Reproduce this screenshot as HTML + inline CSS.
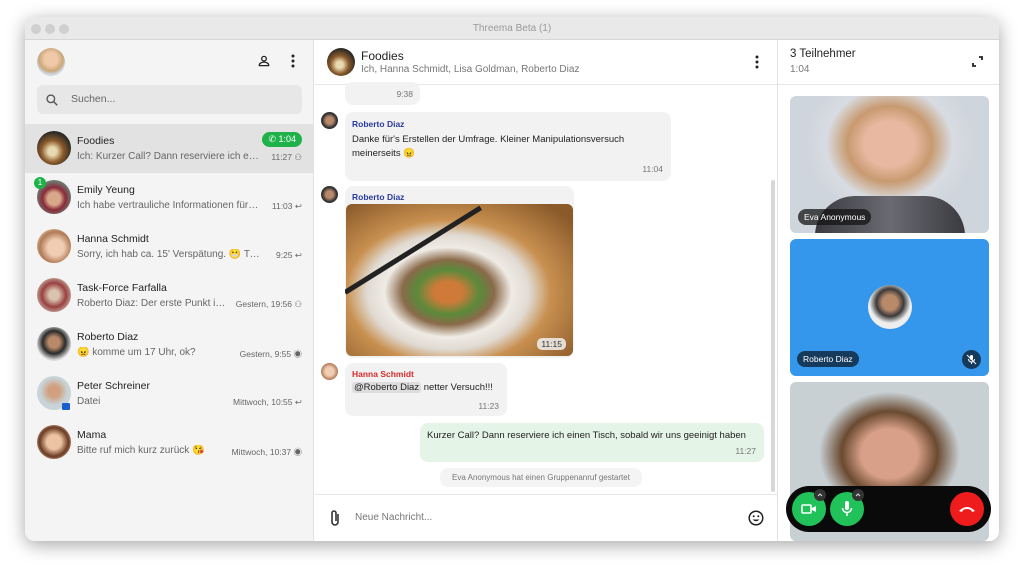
<!DOCTYPE html>
<html><head><meta charset="utf-8"><style>
*{box-sizing:border-box;margin:0;padding:0}
body{width:1024px;height:571px;background:#fff;font-family:"Liberation Sans","Noto Sans CJK JP",sans-serif;position:relative;overflow:hidden;color:#222}
.win{position:absolute;left:25px;top:17px;width:974px;height:524px;border-radius:10px;overflow:hidden;box-shadow:0 4px 18px rgba(0,0,0,.35);background:#fff}
.tb{position:absolute;left:0;top:0;width:974px;height:23px;background:#e9e9e9;border-bottom:1px solid #d6d6d6;text-align:center;font-size:10px;color:#9a9a9a;line-height:23px}
.dot{position:absolute;top:7px;width:10px;height:10px;border-radius:50%;background:#cfcfcf}
.left{position:absolute;left:0;top:23px;width:289px;height:501px;background:#f4f4f4;border-right:1px solid #e2e2e2}
.av{position:absolute;border-radius:50%}
.search{position:absolute;left:12px;top:45px;width:265px;height:29px;background:#e7e7e7;border-radius:6px;font-size:10.5px;color:#666;line-height:29px;padding-left:34px}
.row{position:absolute;left:0;width:289px;height:49px}
.row .n{position:absolute;left:52px;top:11px;font-size:10.5px;color:#222}
.row .m{position:absolute;left:52px;top:27px;font-size:10px;color:#666;white-space:nowrap;overflow:hidden;text-overflow:ellipsis;max-width:188px}
.row .t{position:absolute;right:12px;top:28px;font-size:8.5px;color:#666}
.row .av{left:12px;top:7px;width:34px;height:34px}
.mid{position:absolute;left:290px;top:23px;width:462px;height:501px;background:#fff}
.hdr{position:absolute;left:0;top:0;width:462px;height:45px;border-bottom:1px solid #e6e6e6;background:#fff}
.bub{position:absolute;background:#f2f2f2;border-radius:8px;font-size:9.5px;white-space:nowrap}
.sn{font-size:8.5px;font-weight:bold;color:#2a3b9e}
.tm{position:absolute;right:8px;font-size:8.5px;color:#777}
.right{position:absolute;left:752px;top:23px;width:222px;height:501px;background:#fff;border-left:1px solid #e2e2e2}
.tile{position:absolute;left:12px;width:199px;border-radius:6px;overflow:hidden}
.lbl{position:absolute;background:rgba(20,20,20,.75);color:#fff;font-size:8.5px;border-radius:9px;padding:3px 6px}
</style></head><body>
<div class="win">
<div class="tb"><div class="dot" style="left:6px"></div><div class="dot" style="left:20px"></div><div class="dot" style="left:34px"></div>Threema Beta (1)</div>
<div class="left">
 <div class="av" style="left:12px;top:8px;width:28px;height:28px;background:radial-gradient(circle at 50% 40%,#f0c9a8 30%,#c9a77a 55%,#cfd8e4 70%)"></div>
 <svg style="position:absolute;left:232px;top:14px" width="14" height="14" viewBox="0 0 24 24"><circle cx="12" cy="8" r="4" fill="none" stroke="#222" stroke-width="2.2"/><path d="M4 20v-1c0-3 4-5 8-5s8 2 8 5v1z" fill="none" stroke="#222" stroke-width="2.2"/></svg>
 <svg style="position:absolute;left:264px;top:14px" width="8" height="14" viewBox="0 0 8 14"><circle cx="4" cy="2" r="1.5" fill="#222"/><circle cx="4" cy="7" r="1.5" fill="#222"/><circle cx="4" cy="12" r="1.5" fill="#222"/></svg>
 <div class="search">Suchen...</div>
 <svg style="position:absolute;left:20px;top:53px" width="14" height="14" viewBox="0 0 24 24"><circle cx="10" cy="10" r="6.5" fill="none" stroke="#555" stroke-width="2.3"/><path d="M15 15l6 6" stroke="#555" stroke-width="2.5"/></svg>
 <div class="row" style="top:84px;background:#e2e2e2"><div class="av" style="background:radial-gradient(circle at 45% 60%,#e8d9b0 15%,#8a5a2a 40%,#2d2a26 70%)"></div><div class="n">Foodies</div><div class="m" style="max-width:182px">Ich: Kurzer Call? Dann reserviere ich eine...</div><div class="t">11:27 ⚇</div>
  <div style="position:absolute;right:12px;top:8px;background:#1fb24a;color:#fff;font-size:9px;border-radius:8px;padding:2px 6px">✆ 1:04</div></div>
 <div class="row" style="top:133px"><div class="av" style="background:radial-gradient(circle at 50% 55%,#d8a88a 25%,#8b2a3a 45%,#6d7a70 70%)"></div><div class="n">Emily Yeung</div><div class="m" style="max-width:182px">Ich habe vertrauliche Informationen für d...</div><div class="t">11:03 ↩</div>
  <div style="position:absolute;left:9px;top:4px;width:12px;height:12px;border-radius:50%;background:#1fb24a;color:#fff;font-size:8px;text-align:center;line-height:12px">1</div></div>
 <div class="row" style="top:182px"><div class="av" style="background:radial-gradient(circle at 55% 55%,#f1cdb4 30%,#b07a55 60%,#dcc2a8 80%)"></div><div class="n">Hanna Schmidt</div><div class="m" style="max-width:186px">Sorry, ich hab ca. 15' Verspätung. 😬 Tut ...</div><div class="t">9:25 ↩</div></div>
 <div class="row" style="top:231px"><div class="av" style="background:radial-gradient(circle at 50% 50%,#d9c4b0 20%,#9a4040 50%,#c8b8a8 80%)"></div><div class="n">Task-Force Farfalla</div><div class="m" style="max-width:150px">Roberto Diaz: Der erste Punkt is...</div><div class="t">Gestern, 19:56 ⚇</div></div>
 <div class="row" style="top:280px"><div class="av" style="background:radial-gradient(circle at 50% 45%,#b88a6a 22%,#2a2a2a 45%,#ddd 70%)"></div><div class="n">Roberto Diaz</div><div class="m">😠 komme um 17 Uhr, ok?</div><div class="t">Gestern, 9:55 ◉</div></div>
 <div class="row" style="top:329px"><div class="av" style="background:radial-gradient(circle at 50% 45%,#d0a080 22%,#c8d4d8 55%)"></div><div class="n">Peter Schreiner</div><div class="m">Datei</div><div class="t">Mittwoch, 10:55 ↩</div>
  <div style="position:absolute;left:37px;top:34px;width:8px;height:7px;background:#1a5fd0;border-radius:1px"></div></div>
 <div class="row" style="top:378px"><div class="av" style="background:radial-gradient(circle at 50% 50%,#ecc3a3 30%,#6a3a22 60%,#c8a890 80%)"></div><div class="n">Mama</div><div class="m">Bitte ruf mich kurz zurück 😘</div><div class="t">Mittwoch, 10:37 ◉</div></div>
</div>
<div class="mid">
 <div class="hdr">
  <div class="av" style="left:12px;top:8px;width:28px;height:28px;background:radial-gradient(circle at 45% 60%,#e8d9b0 15%,#8a5a2a 40%,#2d2a26 70%)"></div>
  <div style="position:absolute;left:46px;top:9px;font-size:12px">Foodies</div>
  <div style="position:absolute;left:46px;top:24px;font-size:10px;color:#777">Ich, Hanna Schmidt, Lisa Goldman, Roberto Diaz</div>
  <svg style="position:absolute;left:438px;top:15px" width="8" height="14" viewBox="0 0 8 14"><circle cx="4" cy="2" r="1.5" fill="#222"/><circle cx="4" cy="7" r="1.5" fill="#222"/><circle cx="4" cy="12" r="1.5" fill="#222"/></svg>
 </div>
 <div class="bub" style="left:30px;top:42px;width:75px;height:23px"><span class="tm" style="top:7px;right:7px">9:38</span></div>
 <div class="av" style="left:6px;top:72px;width:17px;height:17px;background:radial-gradient(circle,#b88a6a 30%,#333 60%)"></div>
 <div class="bub" style="left:30px;top:72px;width:326px;height:69px;padding:7px 7px"><div class="sn">Roberto Diaz</div><div style="margin-top:4px;line-height:14px">Danke für's Erstellen der Umfrage. Kleiner Manipulationsversuch<br>meinerseits 😠</div><span class="tm" style="top:52px">11:04</span></div>
 <div class="av" style="left:6px;top:146px;width:17px;height:17px;background:radial-gradient(circle,#b88a6a 30%,#333 60%)"></div>
 <div class="bub" style="left:30px;top:146px;width:229px;height:172px;padding:6px 7px;overflow:hidden"><div class="sn">Roberto Diaz</div>
  <div style="position:absolute;left:1px;top:18px;width:227px;height:152px;border-radius:6px;background:radial-gradient(ellipse at 45% 58%,#d07a3a 8%,#5a8a3a 18%,#8a6a4a 26%,#efebe5 36%,#e0dad2 46%,#c89050 58%,#8a5a2a 90%)"></div>
  <div style="position:absolute;left:0px;top:104px;width:160px;height:5px;background:#222;transform:rotate(-32deg);transform-origin:left center"></div>
  <span class="tm" style="top:152px;background:rgba(240,240,240,.85);border-radius:5px;padding:1px 4px;color:#333">11:15</span></div>
 <div class="av" style="left:6px;top:323px;width:17px;height:17px;background:radial-gradient(circle,#f1cdb4 35%,#b07a55 70%)"></div>
 <div class="bub" style="left:30px;top:323px;width:162px;height:53px;padding:6px 7px"><div class="sn" style="color:#d62a2a">Hanna Schmidt</div><div style="margin-top:3px"><span style="background:#ddd;border-radius:3px;padding:0 2px">@Roberto Diaz</span> netter Versuch!!!</div><span class="tm" style="top:38px">11:23</span></div>
 <div class="bub" style="left:105px;top:383px;width:344px;height:39px;background:#e4f4e7;padding:7px 7px"><div>Kurzer Call? Dann reserviere ich einen Tisch, sobald wir uns geeinigt haben</div><span class="tm" style="top:23px">11:27</span></div>
 <div class="bub" style="left:125px;top:428px;width:202px;height:19px;font-size:8px;color:#777;text-align:center;line-height:19px;background:#f4f4f4">Eva Anonymous hat einen Gruppenanruf gestartet</div>
 <div style="position:absolute;left:456px;top:140px;width:4px;height:312px;background:#d8d8d8;border-radius:2px"></div>
 <div style="position:absolute;left:0;top:454px;width:462px;height:47px;border-top:1px solid #e6e6e6;background:#fff">
  <svg style="position:absolute;left:14px;top:14px" width="12" height="18" viewBox="0 0 12 18"><path d="M9 5v8a3 3 0 0 1-6 0V4a2 2 0 0 1 4 0v8" fill="none" stroke="#333" stroke-width="1.6"/></svg>
  <div style="position:absolute;left:40px;top:17px;font-size:10px;color:#777">Neue Nachricht...</div>
  <svg style="position:absolute;left:433px;top:15px" width="16" height="16" viewBox="0 0 16 16"><circle cx="8" cy="8" r="6.8" fill="none" stroke="#222" stroke-width="1.5"/><circle cx="5.7" cy="6.3" r="1" fill="#222"/><circle cx="10.3" cy="6.3" r="1" fill="#222"/><path d="M4.5 9.5q3.5 3.5 7 0z" fill="#222"/></svg>
 </div>
</div>
<div class="right">
 <div style="position:absolute;left:0;top:0;width:222px;height:45px;border-bottom:1px solid #e6e6e6">
  <div style="position:absolute;left:12px;top:8px;font-size:11.5px">3 Teilnehmer</div>
  <div style="position:absolute;left:12px;top:24px;font-size:10px;color:#777">1:04</div>
  <svg style="position:absolute;left:194px;top:16px" width="11" height="11" viewBox="0 0 11 11"><path d="M7 1h3v3M4 10H1V7" fill="none" stroke="#222" stroke-width="1.8"/></svg>
 </div>
 <div class="tile" style="top:56px;height:137px;background:radial-gradient(ellipse at 50% 35%,#e8b8a0 18%,#c89a70 30%,#d8dce2 45%,#cfd5dd 60%),#d5d9e0">
  <div style="position:absolute;left:25px;top:100px;width:150px;height:40px;background:linear-gradient(90deg,#3a3a40,#6a6a72,#3a3a40);border-radius:40px 40px 0 0"></div>
  <div class="lbl" style="left:8px;top:113px">Eva Anonymous</div></div>
 <div class="tile" style="top:199px;height:137px;background:#3497ec">
  <div class="av" style="left:78px;top:46px;width:44px;height:44px;background:radial-gradient(circle at 50% 40%,#b88a6a 22%,#3a3a3a 40%,#eee 60%)"></div>
  <div class="lbl" style="left:7px;top:112px;background:#163a5c">Roberto Diaz</div>
  <div style="position:absolute;left:172px;top:111px;width:19px;height:19px;border-radius:50%;background:#163a5c"></div>
  <svg style="position:absolute;left:176px;top:115px" width="11" height="11" viewBox="0 0 11 11"><rect x="4" y="1" width="3" height="5" rx="1.5" fill="#fff"/><path d="M2.5 5a3 3 0 0 0 6 0M5.5 8v2M1 1l9 9" fill="none" stroke="#fff" stroke-width="1"/></svg></div>
 <div class="tile" style="top:342px;height:159px;background:radial-gradient(ellipse at 50% 45%,#d8a088 20%,#6a4a30 34%,#c8d0d4 50%),#c8d0d4"></div>
 <div style="position:absolute;left:8px;top:446px;width:205px;height:46px;border-radius:23px;background:#0a0a0a">
  <div style="position:absolute;left:6px;top:6px;width:34px;height:34px;border-radius:50%;background:#22c25a"></div>
  <svg style="position:absolute;left:15px;top:17px" width="16" height="12" viewBox="0 0 16 12"><rect x="1" y="2" width="9" height="8" rx="1" fill="none" stroke="#fff" stroke-width="1.6"/><path d="M11 5l4-2v6l-4-2z" fill="#fff"/></svg>
  <div style="position:absolute;left:44px;top:6px;width:34px;height:34px;border-radius:50%;background:#22c25a"></div>
  <svg style="position:absolute;left:55px;top:14px" width="12" height="17" viewBox="0 0 12 17"><rect x="4" y="1" width="4" height="9" rx="2" fill="#fff"/><path d="M1.5 8a4.5 4.5 0 0 0 9 0M6 12.5V16" fill="none" stroke="#fff" stroke-width="1.5"/></svg>
  <div style="position:absolute;left:28px;top:3px;width:12px;height:12px;border-radius:50%;background:#333"></div>
  <svg style="position:absolute;left:31px;top:6px" width="6" height="6" viewBox="0 0 6 6"><path d="M1 4l2-2 2 2" fill="none" stroke="#ddd" stroke-width="1"/></svg>
  <div style="position:absolute;left:66px;top:3px;width:12px;height:12px;border-radius:50%;background:#333"></div>
  <svg style="position:absolute;left:69px;top:6px" width="6" height="6" viewBox="0 0 6 6"><path d="M1 4l2-2 2 2" fill="none" stroke="#ddd" stroke-width="1"/></svg>
  <div style="position:absolute;left:164px;top:6px;width:34px;height:34px;border-radius:50%;background:#ee1c1c"></div>
  <svg style="position:absolute;left:172px;top:19px" width="18" height="8" viewBox="0 0 18 8"><path d="M1 6q8-8 16 0l-3 1-1-2q-4-2-8 0l-1 2z" fill="#fff"/></svg>
 </div>
</div>
</div>
</body></html>
